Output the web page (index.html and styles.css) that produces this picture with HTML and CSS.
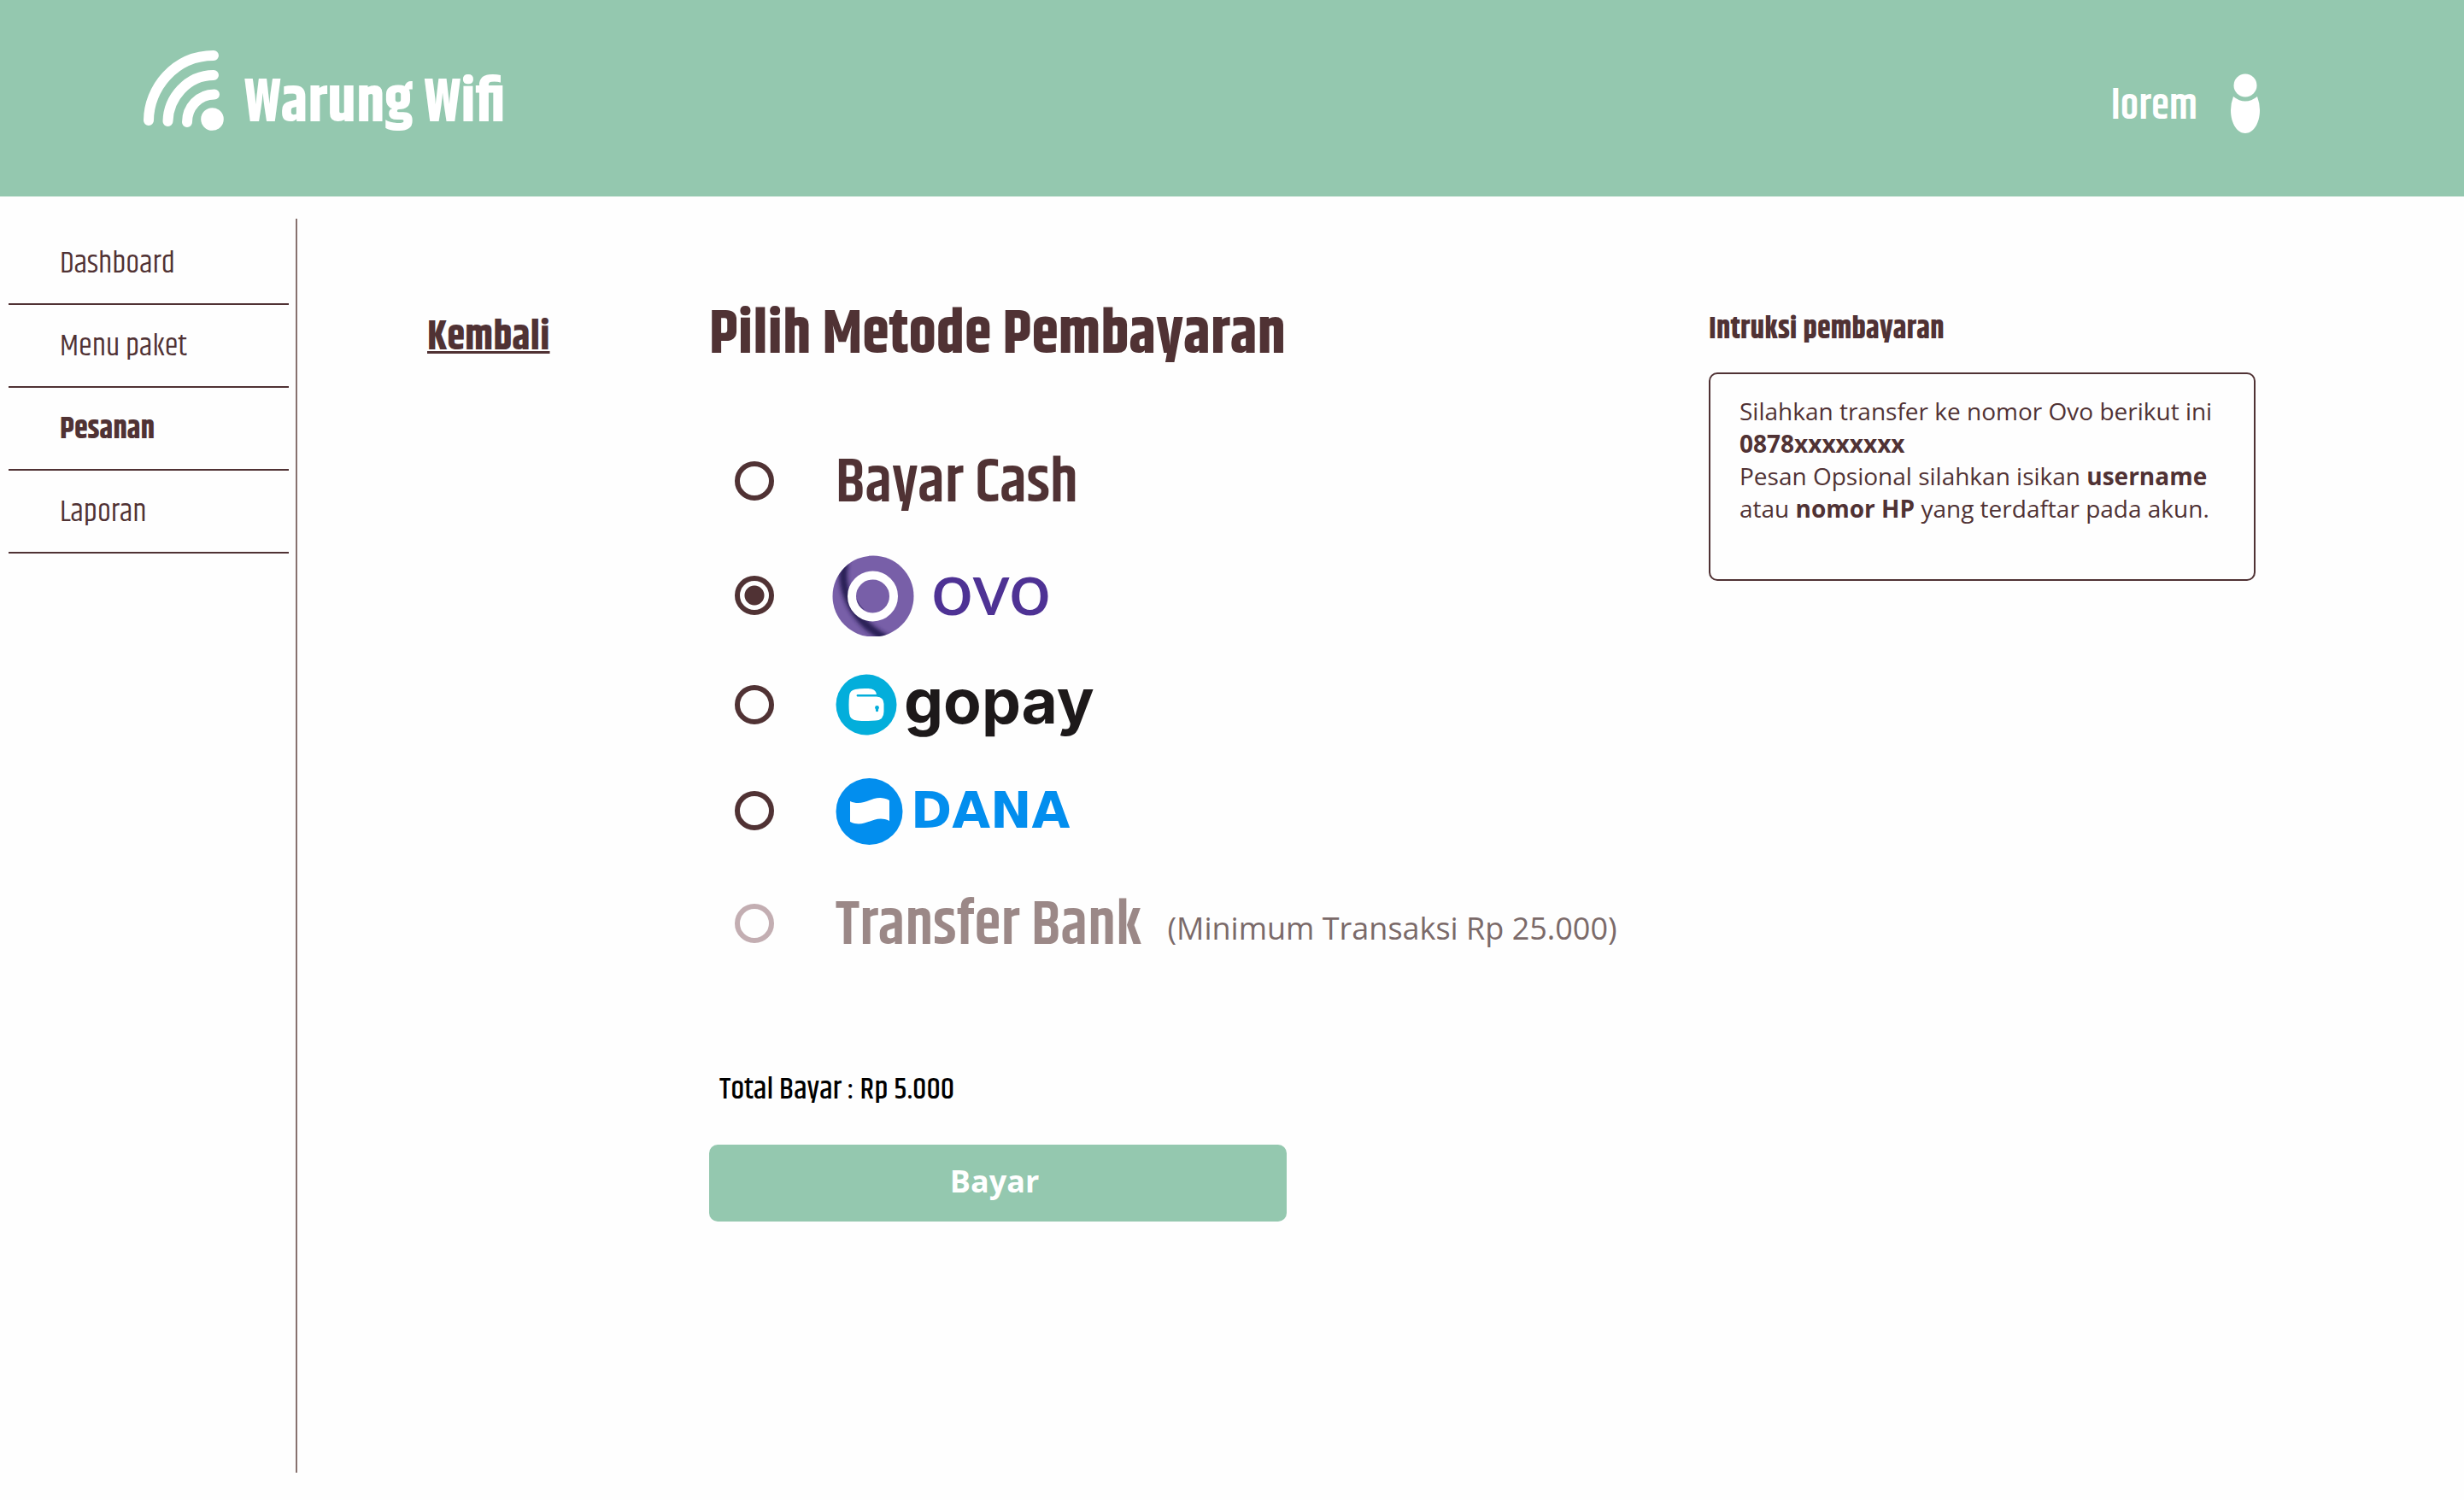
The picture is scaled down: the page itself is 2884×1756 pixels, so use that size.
FILE: index.html
```html
<!DOCTYPE html>
<html lang="id">
<head>
<meta charset="utf-8">
<meta name="viewport" content="width=device-width, initial-scale=1">
<title>Warung Wifi</title>
<link rel="stylesheet" href="styles.css">
</head>
<body>
<header class="topbar">
  <a class="brand" href="#">
    <svg class="brand-icon" viewBox="0 0 94 94" aria-hidden="true">
      <g fill="none" stroke="#fff" stroke-width="12" stroke-linecap="round">
        <path d="M6 82C6 45 36 6 82 6"/>
        <path d="M28.500 83C29 56 51 29 82 29"/>
        <path d="M51 84C51 67 64 51.500 83 51.500"/>
      </g>
      <circle cx="80.500" cy="80.500" r="13.300" fill="#fff"/>
    </svg>
    <span class="brand-name">Warung Wifi</span>
  </a>
  <a class="user" href="#">
    <span class="user-name">lorem</span>
    <svg class="user-icon" viewBox="0 0 36 72" aria-hidden="true">
      <path d="M4 27Q18 38 32 27Q35 35 35 43C35 59 27 70 18 70S1 59 1 43Q1 35 4 27Z" fill="#fff"/>
      <circle cx="18" cy="14" r="13.500" fill="#fff"/>
    </svg>
  </a>
</header>
<div class="layout">
  <nav class="sidebar">
    <ul class="menu">
      <li><a href="#">Dashboard</a></li>
      <li><a href="#">Menu paket</a></li>
      <li><a class="active" href="#" aria-current="page">Pesanan</a></li>
      <li><a href="#">Laporan</a></li>
    </ul>
  </nav>
  <main class="content">
    <div class="back"><a href="#">Kembali</a></div>
    <form class="payment">
      <h1>Pilih Metode Pembayaran</h1>
      <div class="methods">
        <label class="method"><input type="radio" name="method"><span class="method-name">Bayar Cash</span></label>
        <label class="method"><input type="radio" name="method" checked>
          <span class="logo logo-ovo">
            <svg viewBox="0 0 96 96" width="96" height="96" aria-hidden="true">
              <defs>
                <clipPath id="disc"><circle cx="48" cy="49" r="47.500"/></clipPath>
                <filter id="soft" x="-20%" y="-20%" width="140%" height="140%"><feGaussianBlur stdDeviation="2.500"/></filter>
              </defs>
              <g clip-path="url(#disc)">
                <rect width="96" height="97" fill="#785fa8"/>
                <path d="M15 9C8 35 20 77 64 99" fill="none" stroke="#261c52" stroke-width="9" filter="url(#soft)"/>
              </g>
              <circle cx="47.500" cy="49" r="24.500" fill="#785fa8" stroke="#fff" stroke-width="10"/>
              <path d="M28.500 51Q30 61 38 65Q31 59 28.500 51Z" fill="#3d3070"/>
            </svg>
            <span>ovo</span>
          </span>
        </label>
        <label class="method"><input type="radio" name="method">
          <span class="logo logo-gopay">
            <svg viewBox="0 0 72 72" width="72" height="72" aria-hidden="true">
              <circle cx="36" cy="36" r="35.500" fill="#03aedb"/>
              <path d="M23 18Q30 16.500 38 17Q47 17 48 24H25.500A1.300 1.300 0 0 0 25.500 26.500H48Q56.500 27 56.500 35V44Q56.500 54 47 54.500Q36 55.500 25 54.500Q17 54 16 46Q15 36 16 26Q16.500 19 23 18Z" fill="#fff"/>
              <circle cx="48.500" cy="39.500" r="2.400" fill="#03aedb"/>
              <path d="M47 40h3v3.500q-1.500 1.500-3 0Z" fill="#03aedb"/>
            </svg>
            <span>gopay</span>
          </span>
        </label>
        <label class="method"><input type="radio" name="method">
          <span class="logo logo-dana">
            <svg viewBox="0 0 80 80" width="80" height="80" aria-hidden="true">
              <circle cx="39.500" cy="41" r="39" fill="#028eee"/>
              <path d="M17 29C35 37 45 18 63 28V52C45 43 35 62 17 53Z" fill="#fff"/>
            </svg>
            <span>DANA</span>
          </span>
        </label>
        <label class="method"><input type="radio" name="method" disabled><span class="method-name">Transfer Bank</span><span class="method-note">(Minimum Transaksi Rp 25.000)</span></label>
      </div>
      <p class="total">Total Bayar : Rp 5.000</p>
      <button class="pay" type="submit">Bayar</button>
    </form>
    <aside class="instructions">
      <h2>Intruksi pembayaran</h2>
      <div class="note">Silahkan transfer ke nomor Ovo berikut ini<br><strong>0878xxxxxxxx</strong><br>Pesan Opsional silahkan isikan <strong>username</strong> atau <strong>nomor HP</strong> yang terdaftar pada akun.</div>
    </aside>
  </main>
</div>
</body>
</html>
```
FILE: styles.css
```css
:root {
  --green: #94c8af;
  --brown: #503234;
  --display: Khand, "Liberation Sans Narrow", sans-serif;
  --text: "Open Sans", "Noto Sans", sans-serif;
}
* { box-sizing: border-box; }
body {
  margin: 0;
  min-height: 100vh;
  background: #fefefe;
  color: var(--brown);
  font-family: var(--display);
  display: flex;
  flex-direction: column;
}
a { color: inherit; text-decoration: none; }
h1, h2, p, ul { margin: 0; padding: 0; }

.topbar {
  height: 230px;
  padding: 0 238px 0 168px;
  display: flex;
  align-items: center;
  justify-content: space-between;
  background: var(--green);
  color: #fff;
}
.brand { display: flex; align-items: center; gap: 24px; padding-bottom: 18px; }
.brand-icon { width: 94px; height: 94px; }
.brand-name { font-size: 72px; font-weight: 700; line-height: 80px; padding-top: 30px; }
.user { display: flex; align-items: center; gap: 38px; padding-top: 14px; }
.user-name { font-size: 48px; font-weight: 600; line-height: 56px; padding-top: 8px; }
.user-icon { width: 36px; height: 72px; }

.layout { flex: 1; display: flex; padding: 26px 0 32px; }
.sidebar {
  width: 348px;
  flex: none;
  padding: 4px 8px 0 10px;
  border-right: 2px solid #87726f;
}
.menu { list-style: none; }
.menu a {
  display: flex;
  align-items: center;
  height: 97px;
  padding: 2px 0 0 60px;
  border-bottom: 2px solid var(--brown);
  font-size: 36px;
  font-weight: 400;
}
.menu .active { font-weight: 700; }

.content {
  flex: 1;
  display: grid;
  grid-template-columns: 330px 1fr 640px;
  align-items: start;
  padding: 96px 244px 0 152px;
}
.back {
  padding-top: 4px;
  font-size: 48px;
  font-weight: 700;
  line-height: 80px;
  text-decoration: underline;
  text-decoration-thickness: 3px;
}
h1 { font-size: 72px; font-weight: 700; line-height: 80px; }
.methods {
  display: grid;
  grid-template-rows: 134px 134px 122px 126px 138px;
  padding: 64px 0 0 30px;
}
.method { display: flex; align-items: center; }
.method input {
  appearance: none;
  width: 46px;
  height: 46px;
  margin: 0 72px 0 0;
  border: 6px solid var(--brown);
  border-radius: 50%;
}
.method input:checked { background: radial-gradient(circle, var(--brown) 11px, transparent 12px); }
.method input:disabled { border-color: #c3aeb2; }
.method-name { font-size: 72px; font-weight: 600; line-height: 80px; padding-top: 6px; }
.method input:disabled ~ .method-name { color: #9b8887; }
.method-note { margin-left: 30px; color: #7b6a69; font: 36px/48px var(--text); padding-top: 12px; }
.logo { display: flex; align-items: center; }
.logo-ovo { margin-left: -4px; gap: 20px; color: #4e3294; font: 500 86px/96px Lato, sans-serif; }
.logo-ovo span { padding-bottom: 20px; }
.logo-gopay { gap: 8px; color: #1d191a; font: 700 73px/72px Inter, sans-serif; }
.logo-gopay span { padding-bottom: 8px; }
.logo-dana { gap: 8px; color: #028eee; font: 700 58px/80px "DejaVu Sans", sans-serif; }
.total { padding: 106px 0 0 12px; color: #000; font-size: 36px; font-weight: 500; line-height: 40px; }
.pay {
  display: block;
  width: 676px;
  height: 90px;
  margin-top: 44px;
  padding: 0 8px 4px 0;
  border: 0;
  border-radius: 10px;
  background: var(--green);
  color: #fff;
  font: 700 36px/48px var(--text);
}
h2 { font-size: 36px; font-weight: 700; line-height: 40px; padding-top: 14px; }
.note {
  min-height: 244px;
  margin-top: 30px;
  padding: 24px 34px;
  border: 2px solid var(--brown);
  border-radius: 10px;
  font: 28px/38px var(--text);
}
```
